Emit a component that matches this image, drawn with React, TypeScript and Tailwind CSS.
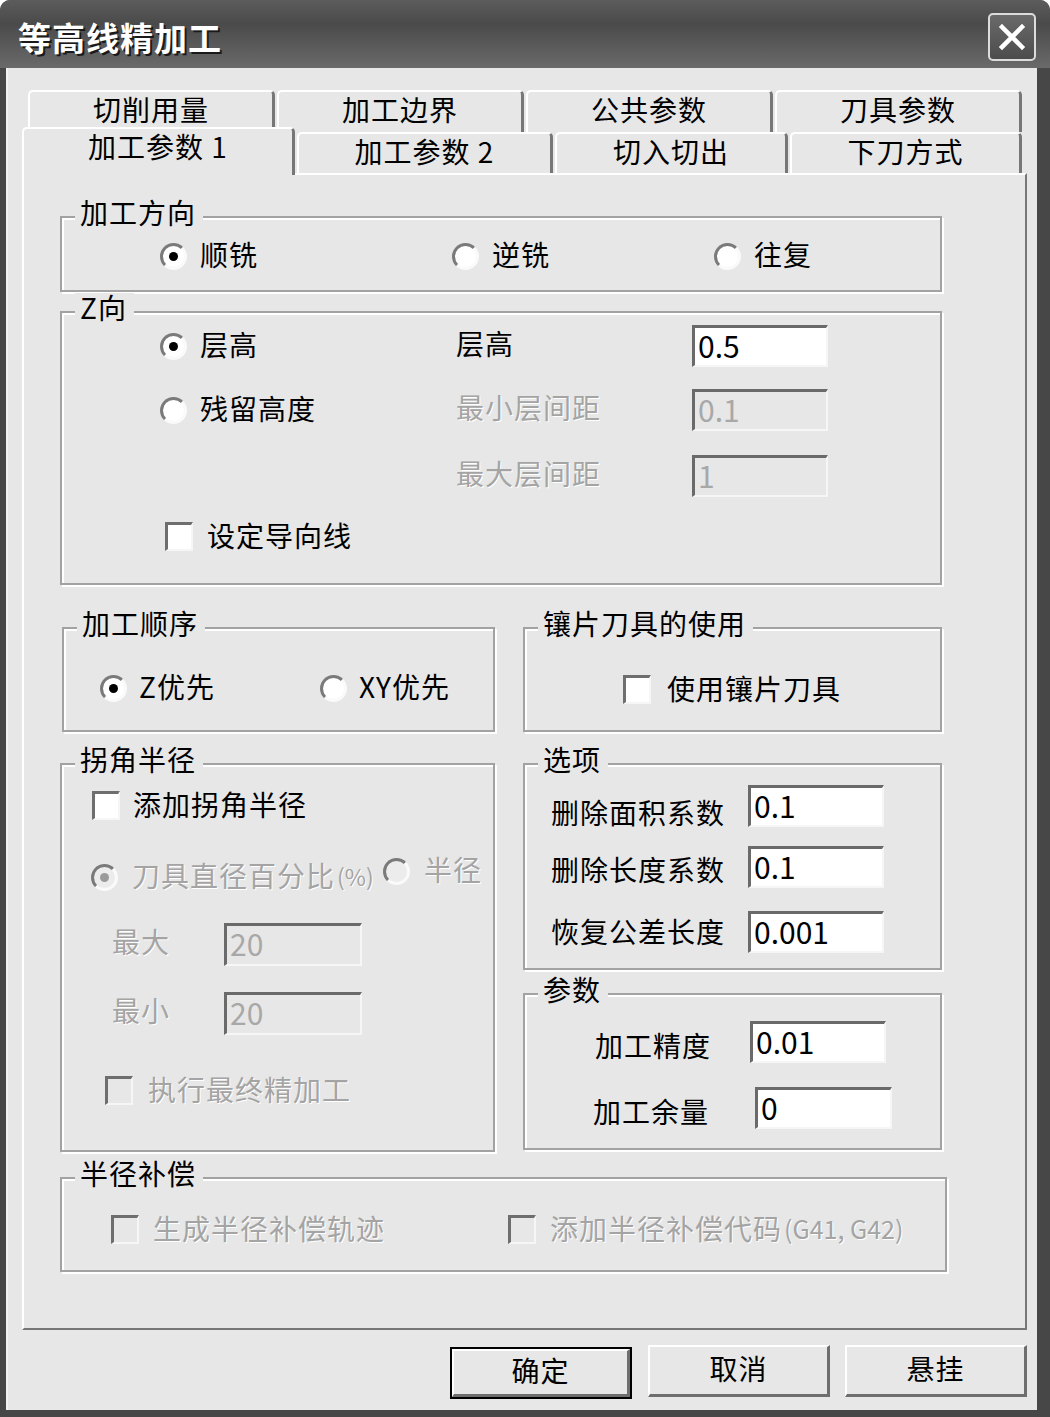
import React from "react";

type RI = { checked?: boolean; disabled?: boolean };

function Radio({ checked = false, disabled = false }: RI) {
  return (
    <span
      className={`inline-flex h-[27px] w-[27px] shrink-0 items-center justify-center rounded-full border-[3px] border-t-[#7a7a7a] border-l-[#7a7a7a] border-r-[#fafafa] border-b-[#fafafa] ${
        disabled ? "bg-[#ececec]" : "bg-white"
      }`}
    >
      {checked && (
        <span className={`h-[9px] w-[9px] rounded-full ${disabled ? "bg-[#9a9a9a]" : "bg-black"}`} />
      )}
    </span>
  );
}

function Check({ disabled = false }: { disabled?: boolean }) {
  return (
    <span
      className={`inline-block h-[29px] w-[28px] shrink-0 border-t-[3px] border-l-[3px] border-r-2 border-b-2 border-t-[#6e6e6e] border-l-[#6e6e6e] border-r-[#f6f6f6] border-b-[#f6f6f6] ${
        disabled ? "bg-[#e7e7e7]" : "bg-white"
      }`}
    />
  );
}

function Txt({ children, disabled = false, className = "" }: { children: React.ReactNode; disabled?: boolean; className?: string }) {
  return (
    <span
      className={`relative top-[-2px] whitespace-nowrap text-[28px] leading-none tracking-[1px] ${
        disabled ? "text-[#a4a4a4] [text-shadow:1px_1px_0_#ffffff]" : "text-black"
      } ${className}`}
    >
      {children}
    </span>
  );
}

function RadioItem({ label, checked = false, disabled = false, className = "", gap = "gap-[13px]" }: { label: React.ReactNode; checked?: boolean; disabled?: boolean; className?: string; gap?: string }) {
  return (
    <div className={`flex items-center ${gap} ${className}`}>
      <Radio checked={checked} disabled={disabled} />
      <Txt disabled={disabled}>{label}</Txt>
    </div>
  );
}

function CheckItem({ label, disabled = false, className = "", gap = "gap-[14px]" }: { label: React.ReactNode; disabled?: boolean; className?: string; gap?: string }) {
  return (
    <div className={`flex items-center ${gap} ${className}`}>
      <Check disabled={disabled} />
      <Txt disabled={disabled}>{label}</Txt>
    </div>
  );
}

function Field({ value, disabled = false, className = "w-[136px]" }: { value: string; disabled?: boolean; className?: string }) {
  return (
    <div
      className={`flex h-[42px] shrink-0 items-center border-t-[3px] border-l-[3px] border-r-2 border-b-2 border-t-[#6a6a6a] border-l-[#6a6a6a] border-r-[#f6f6f6] border-b-[#f6f6f6] pb-[4px] pl-[3px] text-[30px] leading-none ${
        disabled ? "bg-[#e7e7e7] text-[#a8a8a8]" : "bg-white text-black"
      } ${className}`}
    >
      {value}
    </div>
  );
}

function Group({ label, className = "", children }: { label: string; className?: string; children?: React.ReactNode }) {
  return (
    <div className={`relative shrink-0 border-2 border-[#a2a2a2] shadow-[inset_2px_2px_0_#ffffff,2px_2px_0_#ffffff] ${className}`}>
      <span className="absolute left-[13px] top-[-6px] -translate-y-1/2 whitespace-nowrap bg-[#e7e7e7] pl-[5px] pr-[7px] text-[28px] leading-none tracking-[1px] text-black">
        {label}
      </span>
      {children}
    </div>
  );
}

function Tab({ label, className = "" }: { label: string; className?: string }) {
  return (
    <div
      className={`flex shrink-0 justify-center rounded-t-[5px] border-t-2 border-l-2 border-r-[3px] border-t-white border-l-white border-r-[#777777] bg-[#e7e7e7] pt-[3px] text-[28px] leading-none tracking-[1px] text-black ${className}`}
    >
      <span className="whitespace-nowrap">{label}</span>
    </div>
  );
}

function Button({ label, isDefault = false }: { label: string; isDefault?: boolean }) {
  const inner = (
    <div className="flex h-full w-full items-center justify-center border-t-2 border-l-2 border-r-[3px] border-b-[3px] border-t-white border-l-white border-r-[#6e6e6e] border-b-[#6e6e6e] bg-[#e7e7e7] pb-[6px] text-[28px] leading-none tracking-[1px] text-black">
      {label}
    </div>
  );
  if (isDefault) {
    return <div className="mt-[2px] h-[52px] w-[182px] border-2 border-black">{inner}</div>;
  }
  return <div className="h-[52px] w-[182px]">{inner}</div>;
}

export default function App() {
  return (
    <div className="flex h-[1417px] w-[1050px] flex-col overflow-hidden rounded-t-[10px] bg-[#474747] font-['Noto_Sans_CJK_SC','Noto_Sans',sans-serif]">
      {/* Title bar */}
      <div className="flex h-[68px] shrink-0 items-center justify-between bg-[linear-gradient(to_bottom,#5c5c5c,#4a4a4a_35%,#6a6a6a)] pl-[18px] pr-[14px] pt-[6px]">
        <span className="text-[33px] font-bold leading-none tracking-[1px] text-white [text-shadow:2px_2px_0_#1a1a1a]">
          等高线精加工
        </span>
        <div className="flex h-[48px] w-[48px] items-center justify-center rounded-[5px] border-2 border-[#dcdcdc] bg-[linear-gradient(to_bottom,#6a6a6a,#4c4c4c)]">
          <svg width="30" height="30" viewBox="0 0 30 30">
            <path d="M5 5 L25 25 M25 5 L5 25" stroke="#ffffff" strokeWidth="4.5" strokeLinecap="square" fill="none" />
          </svg>
        </div>
      </div>

      {/* Body */}
      <div className="mb-[7px] ml-[6px] mr-[13px] flex flex-1 flex-col border-l-2 border-l-[#f2f2f2] bg-[#e7e7e7]">
        <div className="ml-[14px] mt-[22px] w-[1005px]">
          {/* tab row 1 */}
          <div className="flex h-[42px] gap-[2px] pl-[6px]">
            <Tab label="切削用量" className="w-[247px]" />
            <Tab label="加工边界" className="w-[247px]" />
            <Tab label="公共参数" className="w-[247px]" />
            <Tab label="刀具参数" className="w-[247px]" />
          </div>
          {/* tab row 2 */}
          <div className="flex h-[41px] items-end gap-[2px]">
            <Tab label="加工参数 1" className="relative z-10 mb-[-2px] h-[48px] w-[273px]" />
            <Tab label="加工参数 2" className="h-[41px] w-[256px]" />
            <Tab label="切入切出" className="h-[41px] w-[233px]" />
            <Tab label="下刀方式" className="h-[41px] w-[232px]" />
          </div>

          {/* panel */}
          <div className="flex h-[1157px] flex-col border-t-2 border-l-2 border-r-2 border-b-2 border-t-white border-l-white border-r-[#777777] border-b-[#777777] pl-[36px]">
            {/* 加工方向 */}
            <Group label="加工方向" className="mt-[41px] h-[76px] w-[882px]">
              <div className="flex items-center pl-[98px] pt-[24px]">
                <RadioItem checked label="顺铣" className="w-[292px]" />
                <RadioItem label="逆铣" className="w-[262px]" />
                <RadioItem label="往复" />
              </div>
            </Group>

            {/* Z向 */}
            <Group label="Z向" className="mt-[19px] h-[274px] w-[882px]">
              <div className="flex flex-col pl-[98px] pt-[12px]">
                <div className="flex h-[42px] items-center">
                  <div className="w-[296px]">
                    <RadioItem checked label="层高" />
                  </div>
                  <div className="w-[236px]">
                    <Txt>层高</Txt>
                  </div>
                  <Field value="0.5" />
                </div>
                <div className="mt-[22px] flex h-[42px] items-center">
                  <div className="w-[296px]">
                    <RadioItem label="残留高度" />
                  </div>
                  <div className="w-[236px]">
                    <Txt disabled>最小层间距</Txt>
                  </div>
                  <Field value="0.1" disabled />
                </div>
                <div className="mt-[24px] flex h-[42px] items-center">
                  <div className="w-[296px]" />
                  <div className="w-[236px]">
                    <Txt disabled>最大层间距</Txt>
                  </div>
                  <Field value="1" disabled />
                </div>
                <CheckItem label="设定导向线" className="ml-[5px] mt-[25px]" />
              </div>
            </Group>

            {/* 加工顺序 + 镶片刀具 */}
            <div className="mt-[42px] flex">
              <Group label="加工顺序" className="ml-[2px] h-[105px] w-[433px]">
                <div className="flex items-center pl-[36px] pt-[45px]">
                  <RadioItem checked label="Z优先" className="w-[220px]" gap="gap-[12px]" />
                  <RadioItem label="XY优先" gap="gap-[12px]" />
                </div>
              </Group>
              <Group label="镶片刀具的使用" className="ml-[28px] h-[105px] w-[419px]">
                <div className="pl-[98px] pt-[46px]">
                  <CheckItem label="使用镶片刀具" gap="gap-[16px]" />
                </div>
              </Group>
            </div>

            {/* 拐角半径 + 选项/参数 */}
            <div className="mt-[31px] flex items-start">
              <Group label="拐角半径" className="h-[389px] w-[435px]">
                <div className="flex flex-col pl-[30px] pt-[26px]">
                  <CheckItem label="添加拐角半径" gap="gap-[13px]" />
                  <div className="ml-[-1px] mt-[43px] flex h-[28px] items-center">
                    <div className="flex w-[292px] items-center gap-[14px]">
                      <Radio checked disabled />
                      <span className="flex items-center">
                        <Txt disabled>刀具直径百分比</Txt>
                        <span className="relative top-[-1px] ml-[2px] whitespace-nowrap text-[23px] leading-none text-[#a4a4a4] [text-shadow:1px_1px_0_#ffffff]">(%)</span>
                      </span>
                    </div>
                    <div className="flex -translate-y-[6px] items-center gap-[14px]">
                      <Radio disabled />
                      <Txt disabled>半径</Txt>
                    </div>
                  </div>
                  <div className="mt-[32px] flex h-[43px] items-center">
                    <div className="ml-[20px] w-[112px]">
                      <Txt disabled>最大</Txt>
                    </div>
                    <Field value="20" disabled className="h-[43px] w-[138px]" />
                  </div>
                  <div className="mt-[26px] flex h-[43px] items-center">
                    <div className="ml-[20px] w-[112px]">
                      <Txt disabled>最小</Txt>
                    </div>
                    <Field value="20" disabled className="h-[43px] w-[138px]" />
                  </div>
                  <CheckItem label="执行最终精加工" disabled className="ml-[13px] mt-[41px]" gap="gap-[15px]" />
                </div>
              </Group>

              <div className="ml-[28px] flex flex-col">
                <Group label="选项" className="h-[207px] w-[419px]">
                  <div className="flex flex-col pl-[26px] pt-[20px]">
                    <div className="flex h-[42px] items-center">
                      <div className="w-[197px] pt-[18px]">
                        <Txt>删除面积系数</Txt>
                      </div>
                      <Field value="0.1" />
                    </div>
                    <div className="mt-[19px] flex h-[42px] items-center">
                      <div className="w-[197px] pt-[10px]">
                        <Txt>删除长度系数</Txt>
                      </div>
                      <Field value="0.1" />
                    </div>
                    <div className="mt-[23px] flex h-[42px] items-center">
                      <div className="w-[197px] pt-[4px]">
                        <Txt>恢复公差长度</Txt>
                      </div>
                      <Field value="0.001" />
                    </div>
                  </div>
                </Group>
                <Group label="参数" className="mt-[23px] h-[157px] w-[419px]">
                  <div className="flex flex-col pt-[26px]">
                    <div className="flex h-[42px] items-center pl-[70px]">
                      <div className="w-[155px] pt-[12px]">
                        <Txt>加工精度</Txt>
                      </div>
                      <Field value="0.01" />
                    </div>
                    <div className="mt-[24px] flex h-[42px] items-center pl-[68px]">
                      <div className="w-[162px] pt-[12px]">
                        <Txt>加工余量</Txt>
                      </div>
                      <Field value="0" className="w-[137px]" />
                    </div>
                  </div>
                </Group>
              </div>
            </div>

            {/* 半径补偿 */}
            <Group label="半径补偿" className="mt-[25px] h-[95px] w-[887px]">
              <div className="flex items-center pl-[49px] pt-[36px]">
                <div className="w-[397px]">
                  <CheckItem label="生成半径补偿轨迹" disabled />
                </div>
                <div className="flex items-center gap-[14px]">
                  <Check disabled />
                  <span className="flex items-center">
                    <Txt disabled>添加半径补偿代码</Txt>
                    <span className="relative top-[-1px] ml-[2px] whitespace-nowrap text-[25px] leading-none text-[#a4a4a4] [text-shadow:1px_1px_0_#ffffff]">(G41, G42)</span>
                  </span>
                </div>
              </div>
            </Group>
          </div>

          {/* buttons */}
          <div className="mt-[15px] flex items-start justify-end">
            <Button label="确定" isDefault />
            <div className="ml-[16px]">
              <Button label="取消" />
            </div>
            <div className="ml-[15px]">
              <Button label="悬挂" />
            </div>
          </div>
        </div>
      </div>
    </div>
  );
}
